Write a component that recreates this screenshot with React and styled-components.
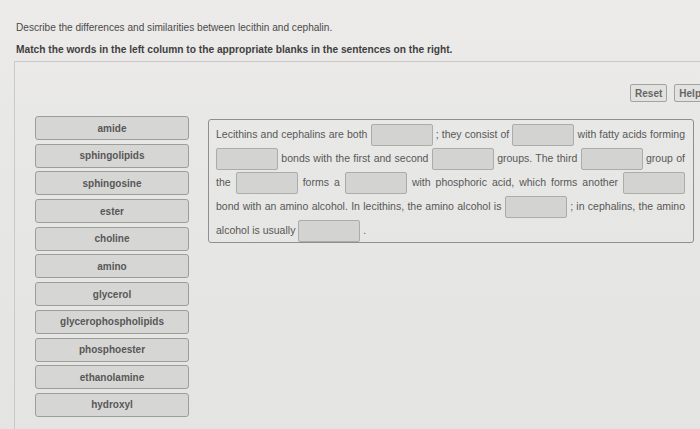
import React from "react";
import styled, { createGlobalStyle } from "styled-components";

const GlobalStyle = createGlobalStyle`
  html, body {
    margin: 0;
    padding: 0;
    overflow: hidden;
    background: #e7e7e5;
  }
  body {
    font-family: "Liberation Sans", Arial, sans-serif;
    color: #444;
  }
`;

const Page = styled.div`
  width: 700px;
  height: 429px;
  overflow: hidden;
  background: linear-gradient(180deg, #ecebea 0%, #e7e7e5 40%, #e4e4e2 100%);
  padding-top: 21px;
  box-sizing: border-box;
`;

const Prompt = styled.p`
  margin: 0 0 ${(p) => (p.$bold ? "4px" : "8px")} 16px;
  font-size: ${(p) => (p.$bold ? "10.2px" : "10.1px")};
  font-weight: ${(p) => (p.$bold ? 700 : 400)};
  color: ${(p) => (p.$bold ? "#3f3f3f" : "#4a4a4a")};
  line-height: 14px;
`;

const Panel = styled.div`
  margin-left: 14px;
  width: 700px;
  height: 400px;
  border-top: 1px solid #c9c9c7;
  border-left: 1px solid #c9c9c7;
  box-sizing: border-box;
  padding: 22px 8px 0 20px;
`;

const Toolbar = styled.div`
  display: flex;
  justify-content: flex-end;
  gap: 7px;
  margin-bottom: 14px;
`;

const ToolButton = styled.button`
  height: 18px;
  padding: 0 4px;
  background: #e2e2e0;
  border: 1px solid #a3a3a1;
  border-radius: 2px;
  font-family: "Liberation Sans", Arial, sans-serif;
  font-size: 10px;
  font-weight: 700;
  color: #666;
  cursor: pointer;
`;

const Workspace = styled.div`
  display: flex;
  align-items: flex-start;
  gap: 19px;
`;

const WordColumn = styled.div`
  display: flex;
  flex-direction: column;
  gap: 3.7px;
  width: 154px;
`;

const WordTile = styled.div`
  height: 24px;
  display: flex;
  align-items: center;
  justify-content: center;
  background: #d6d6d4;
  border: 1px solid #9d9d9b;
  border-radius: 3px;
  box-sizing: border-box;
  font-size: 10px;
  font-weight: 700;
  color: #585858;
`;

const SentenceBox = styled.div`
  margin-top: 3px;
  width: 486px;
  border: 1px solid #8f8f8d;
  border-radius: 3px;
  box-sizing: border-box;
  padding: 2px 8px 2px 7px;
  font-size: 10.5px;
  color: #575757;
`;

const Line = styled.div`
  line-height: 24px;
  height: ${(p) => (p.$last ? "22px" : "24px")};
  text-align: justify;
  text-align-last: ${(p) => (p.$last ? "left" : "justify")};
  white-space: nowrap;
`;

const Blank = styled.span`
  display: inline-block;
  width: 62px;
  height: 22px;
  vertical-align: middle;
  background: #d3d3d1;
  border: 1px solid #acacaa;
  border-radius: 2px;
  box-sizing: border-box;
`;

const words = [
  "amide",
  "sphingolipids",
  "sphingosine",
  "ester",
  "choline",
  "amino",
  "glycerol",
  "glycerophospholipids",
  "phosphoester",
  "ethanolamine",
  "hydroxyl",
];

export default function App() {
  return (
    <>
      <GlobalStyle />
      <Page>
        <Prompt>Describe the differences and similarities between lecithin and cephalin.</Prompt>
        <Prompt $bold>
          Match the words in the left column to the appropriate blanks in the sentences on the right.
        </Prompt>
        <Panel>
          <Toolbar>
            <ToolButton>Reset</ToolButton>
            <ToolButton>Help</ToolButton>
          </Toolbar>
          <Workspace>
            <WordColumn>
              {words.map((w) => (
                <WordTile key={w}>{w}</WordTile>
              ))}
            </WordColumn>
            <SentenceBox>
              <Line>
                Lecithins and cephalins are both <Blank /> ; they consist of <Blank /> with fatty acids forming
              </Line>
              <Line>
                <Blank /> bonds with the first and second <Blank /> groups. The third <Blank /> group of
              </Line>
              <Line>
                the <Blank /> forms a <Blank /> with phosphoric acid, which forms another <Blank />
              </Line>
              <Line>
                bond with an amino alcohol. In lecithins, the amino alcohol is <Blank /> ; in cephalins, the amino
              </Line>
              <Line $last>
                alcohol is usually <Blank /> .
              </Line>
            </SentenceBox>
          </Workspace>
        </Panel>
      </Page>
    </>
  );
}
